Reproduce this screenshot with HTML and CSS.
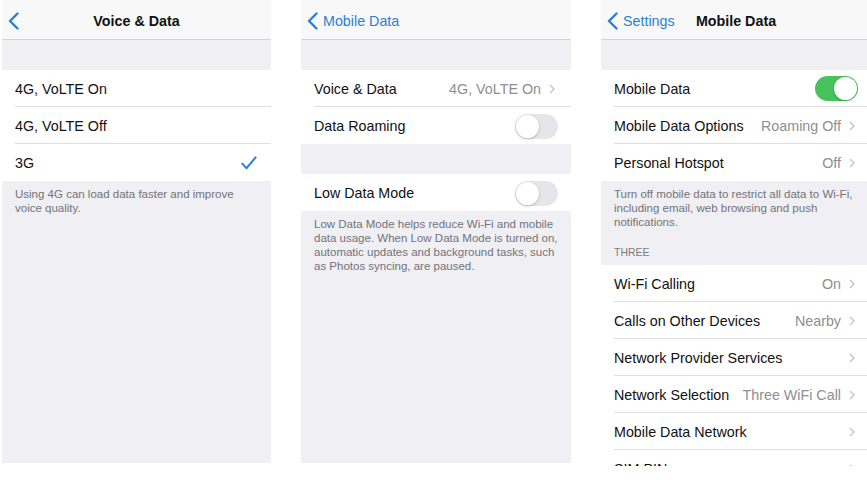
FILE: index.html
```html
<!DOCTYPE html>
<html>
<head>
<meta charset="utf-8">
<link rel="stylesheet" href="styles.css">
</head>
<body>
<div class="stage">
  <!-- Panel 1 -->
  <section class="phone p1">
    <header class="nav">
      <div class="back"><svg class="bchev" viewBox="0 0 11 18" width="11" height="18"><path d="M9.5 1.5 L2 9 L9.5 16.5"/></svg></div>
      <div class="title">Voice &amp; Data</div>
      <div></div>
    </header>
    <div class="spacer"></div>
    <div class="group">
      <div class="row"><span class="label">4G, VoLTE On</span></div>
      <div class="row"><span class="label">4G, VoLTE Off</span></div>
      <div class="row"><span class="label">3G</span><svg class="check" viewBox="0 0 16 14" width="16" height="14"><path d="M1.2 7.6 L5.6 12.2 L14.6 1.4"/></svg></div>
    </div>
    <p class="footer">Using 4G can load data faster and improve voice quality.</p>
  </section>

  <!-- Panel 2 -->
  <section class="phone p2">
    <header class="nav">
      <div class="back"><svg class="bchev" viewBox="0 0 11 18" width="11" height="18"><path d="M9.5 1.5 L2 9 L9.5 16.5"/></svg><span>Mobile Data</span></div>
      <div class="title"></div>
      <div></div>
    </header>
    <div class="spacer"></div>
    <div class="group">
      <div class="row"><span class="label">Voice &amp; Data</span><span class="value">4G, VoLTE On</span><svg class="chev" viewBox="0 0 6 10" width="6" height="10"><path d="M1 1 L5 5 L1 9"/></svg></div>
      <div class="row"><span class="label">Data Roaming</span><span class="toggle"><span class="knob"></span></span></div>
    </div>
    <div class="spacer"></div>
    <div class="group">
      <div class="row"><span class="label">Low Data Mode</span><span class="toggle"><span class="knob"></span></span></div>
    </div>
    <p class="footer">Low Data Mode helps reduce Wi-Fi and mobile data usage. When Low Data Mode is turned on, automatic updates and background tasks, such as Photos syncing, are paused.</p>
  </section>

  <!-- Panel 3 -->
  <section class="phone p3">
    <header class="nav">
      <div class="back"><svg class="bchev" viewBox="0 0 11 18" width="11" height="18"><path d="M9.5 1.5 L2 9 L9.5 16.5"/></svg><span>Settings</span></div>
      <div class="title">Mobile Data</div>
      <div></div>
    </header>
    <div class="spacer"></div>
    <div class="group">
      <div class="row"><span class="label">Mobile Data</span><span class="toggle on"><span class="knob"></span></span></div>
      <div class="row"><span class="label">Mobile Data Options</span><span class="value">Roaming Off</span><svg class="chev" viewBox="0 0 6 10" width="6" height="10"><path d="M1 1 L5 5 L1 9"/></svg></div>
      <div class="row"><span class="label">Personal Hotspot</span><span class="value">Off</span><svg class="chev" viewBox="0 0 6 10" width="6" height="10"><path d="M1 1 L5 5 L1 9"/></svg></div>
    </div>
    <p class="footer">Turn off mobile data to restrict all data to Wi-Fi, including email, web browsing and push notifications.</p>
    <p class="section-head">THREE</p>
    <div class="group">
      <div class="row"><span class="label">Wi-Fi Calling</span><span class="value">On</span><svg class="chev" viewBox="0 0 6 10" width="6" height="10"><path d="M1 1 L5 5 L1 9"/></svg></div>
      <div class="row"><span class="label">Calls on Other Devices</span><span class="value">Nearby</span><svg class="chev" viewBox="0 0 6 10" width="6" height="10"><path d="M1 1 L5 5 L1 9"/></svg></div>
      <div class="row"><span class="label">Network Provider Services</span><span class="value"></span><svg class="chev" viewBox="0 0 6 10" width="6" height="10"><path d="M1 1 L5 5 L1 9"/></svg></div>
      <div class="row"><span class="label">Network Selection</span><span class="value">Three WiFi Call</span><svg class="chev" viewBox="0 0 6 10" width="6" height="10"><path d="M1 1 L5 5 L1 9"/></svg></div>
      <div class="row"><span class="label">Mobile Data Network</span><span class="value"></span><svg class="chev" viewBox="0 0 6 10" width="6" height="10"><path d="M1 1 L5 5 L1 9"/></svg></div>
      <div class="row"><span class="label">SIM PIN</span><span class="value"></span><svg class="chev" viewBox="0 0 6 10" width="6" height="10"><path d="M1 1 L5 5 L1 9"/></svg></div>
    </div>
  </section>
</div>
</body>
</html>
```

FILE: styles.css
```css
html, body {
  margin: 0;
  padding: 0;
  background: #ffffff;
}

body {
  width: 867px;
  height: 483px;
  overflow: hidden;
  font-family: "Liberation Sans", Arial, sans-serif;
  color: #111111;
}

.stage {
  display: flex;
  gap: 30px;
  padding-left: 2px;
  align-items: flex-start;
}

.phone {
  flex: 0 0 auto;
  width: 269px;
  height: 463px;
  background: #efeff4;
  display: flex;
  flex-direction: column;
  overflow: hidden;
}

.phone > * {
  flex-shrink: 0;
}

.p2 {
  width: 270px;
}

.p3 {
  width: 270px;
  height: 466px;
}

.nav {
  height: 40px;
  box-sizing: border-box;
  padding-top: 3px;
  background: #f8f8f8;
  border-bottom: 1px solid #d3d3d8;
  display: grid;
  grid-template-columns: 1fr auto 1fr;
  align-items: center;
  font-size: 14.3px;
}

.back {
  display: flex;
  align-items: center;
  gap: 5px;
  padding-left: 6px;
  color: #2b7fd5;
}

.bchev {
  fill: none;
  stroke: #2b7fd5;
  stroke-width: 2.4;
  stroke-linecap: round;
  stroke-linejoin: round;
}

.title {
  font-weight: bold;
  color: #111;
}

.spacer {
  height: 30px;
}

.group {
  background: #ffffff;
}

.row {
  height: 37px;
  box-sizing: border-box;
  margin-left: 13px;
  padding-right: 13px;
  padding-top: 1px;
  display: flex;
  align-items: center;
  gap: 8px;
  font-size: 14.3px;
  border-bottom: 1px solid #dedee2;
}

.row:last-child {
  border-bottom: none;
}

.label {
  flex: 0 0 auto;
  white-space: nowrap;
}

.value {
  flex: 1 1 auto;
  text-align: right;
  color: #8e8e93;
  white-space: nowrap;
}

.chev {
  flex: 0 0 auto;
  fill: none;
  stroke: #c2c2c7;
  stroke-width: 1.3;
  margin-right: 3px;
}

.check {
  margin-left: auto;
  margin-right: 1px;
  fill: none;
  stroke: #2b7fd5;
  stroke-width: 2;
  stroke-linecap: round;
  stroke-linejoin: round;
}

.toggle {
  margin-left: auto;
  width: 43px;
  height: 25px;
  box-sizing: border-box;
  border-radius: 13px;
  background: #e6e6ea;
  display: flex;
  align-items: center;
  padding: 1px;
  flex: 0 0 auto;
}

.toggle .knob {
  width: 23px;
  height: 23px;
  border-radius: 50%;
  background: #ffffff;
  box-shadow: 0 1px 3px rgba(0, 0, 0, 0.22);
}

.toggle.on {
  background: #46c35c;
  justify-content: flex-end;
}

.footer {
  margin: 0;
  padding: 6px 13px 0;
  font-size: 11.5px;
  line-height: 14px;
  color: #737378;
}

.section-head {
  margin: 0;
  padding: 16px 13px 6px;
  font-size: 10.5px;
  line-height: 14px;
  color: #7b7b80;
}
```
